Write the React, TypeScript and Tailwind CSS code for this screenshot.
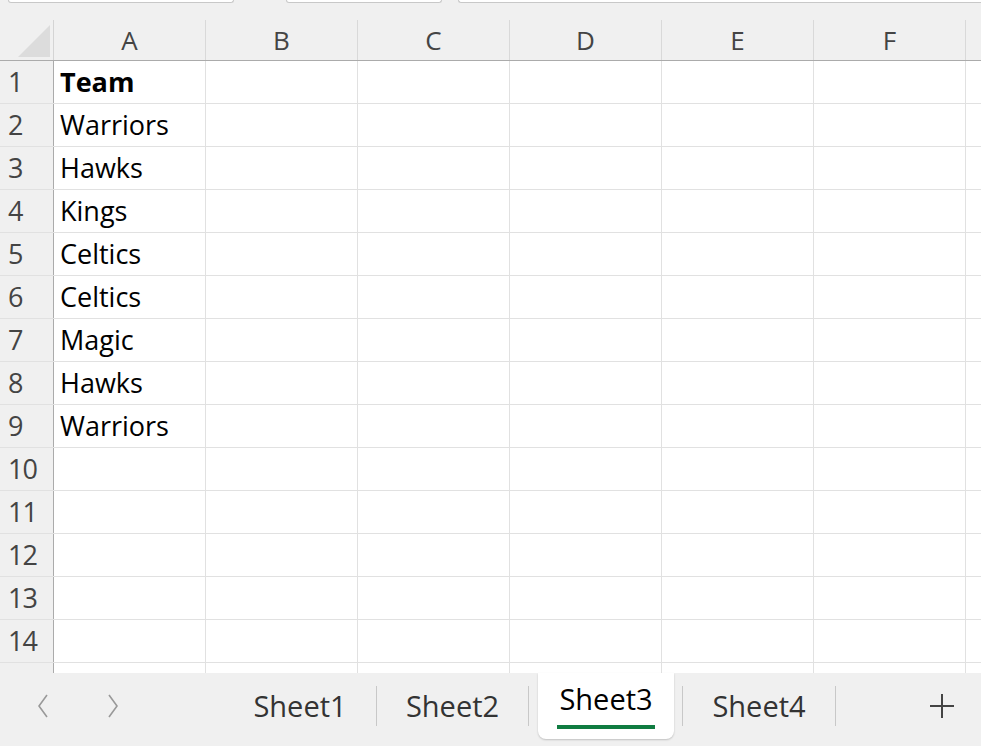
const cols = ['A', 'B', 'C', 'D', 'E', 'F'];
const data = ['Team', 'Warriors', 'Hawks', 'Kings', 'Celtics', 'Celtics', 'Magic', 'Hawks', 'Warriors', '', '', '', '', '', ''];

export default function App() {
  return (
    <div className="w-[981px] h-[753px] overflow-hidden bg-[#f0f0f0] flex flex-col" style={{ fontFamily: '"Open Sans", "Noto Sans", sans-serif' }}>
      {/* top toolbar remnants */}
      <div className="h-[20px] flex items-start">
        <div className="ml-[8px] w-[226px] h-[3px] bg-white border border-t-0 border-[#c8c8c8] rounded-b-[4px]" />
        <div className="ml-[52px] w-[156px] h-[3px] bg-white border border-t-0 border-[#c8c8c8] rounded-b-[4px]" />
        <div className="ml-[16px] flex-1 h-[3px] bg-white border border-t-0 border-r-0 border-[#c8c8c8] rounded-bl-[4px]" />
      </div>
      {/* column headers */}
      <div className="flex h-[41px] shrink-0 border-b border-[#ababab]">
        <div className="w-[54px] shrink-0 relative border-r border-[#d4d4d4]">
          <div className="absolute right-[3px] bottom-[3px] w-0 h-0 border-l-[32px] border-l-transparent border-b-[32px] border-b-[#dcdcdc]" />
        </div>
        {cols.map((c) => (
          <div key={c} className="w-[152px] shrink-0 border-r border-[#d9d9d9] flex items-center justify-center text-[26px] text-[#444]">
            {c}
          </div>
        ))}
        <div className="flex-1" />
      </div>
      {/* grid */}
      <div className="h-[612px] shrink-0 bg-white overflow-hidden">
        {data.map((v, i) => (
          <div key={i} className="flex h-[43px] border-b border-[#e1e1e1]">
            <div className="w-[54px] shrink-0 bg-[#f0f0f0] border-r border-[#ababab] flex items-center pl-[8px] text-[27px] text-[#444] tracking-[-1px]">
              {i + 1}
            </div>
            <div className={`w-[152px] shrink-0 border-r border-[#e1e1e1] flex items-center pl-[6px] text-[27px] text-black ${i === 0 ? 'font-bold' : ''}`}>
              {v}
            </div>
            {[0, 1, 2, 3, 4].map((k) => (
              <div key={k} className="w-[152px] shrink-0 border-r border-[#e1e1e1]" />
            ))}
            <div className="flex-1" />
          </div>
        ))}
      </div>
      {/* sheet tabs */}
      <div className="flex-1 bg-[#f0f0f0] flex items-start relative">
        <div className="flex items-center h-[66px] pl-[36px] gap-[56px] text-[#999]">
          <svg width="14" height="26" viewBox="0 0 14 26" fill="none" stroke="currentColor" strokeWidth="1.6"><path d="M11 2 3 13l8 11" /></svg>
          <svg width="14" height="26" viewBox="0 0 14 26" fill="none" stroke="currentColor" strokeWidth="1.6"><path d="M3 2l8 11-8 11" /></svg>
        </div>
        <div className="flex items-center h-[66px] ml-[104px] text-[29px] text-[#333]">
          <div className="w-[152px] text-center">Sheet1</div>
          <div className="w-[1px] h-[40px] bg-[#c8c8c8]" />
          <div className="w-[151px] text-center">Sheet2</div>
          <div className="w-[1px] h-[40px] bg-[#c8c8c8] mr-[9px]" />
          <div className="w-[136px] h-[66px] -mt-[1px] bg-white rounded-b-[8px] shadow-[0_1px_2px_rgba(0,0,0,0.2)] flex flex-col items-center pt-[8px]">
            <span className="text-black leading-[36px]">Sheet3</span>
            <div className="w-[98px] h-[4px] bg-[#107c41] mt-[8px]" />
          </div>
          <div className="w-[1px] h-[40px] bg-[#c8c8c8] ml-[8px]" />
          <div className="w-[152px] text-center">Sheet4</div>
          <div className="w-[1px] h-[40px] bg-[#c8c8c8]" />
        </div>
        <div className="ml-auto mr-[26px] h-[66px] flex items-center text-[#444]">
          <svg width="26" height="26" viewBox="0 0 26 26" stroke="currentColor" strokeWidth="2"><path d="M13 1v24M1 13h24" /></svg>
        </div>
        <div className="absolute left-0 right-0 bottom-0 h-[7px] bg-white" />
      </div>
    </div>
  );
}
